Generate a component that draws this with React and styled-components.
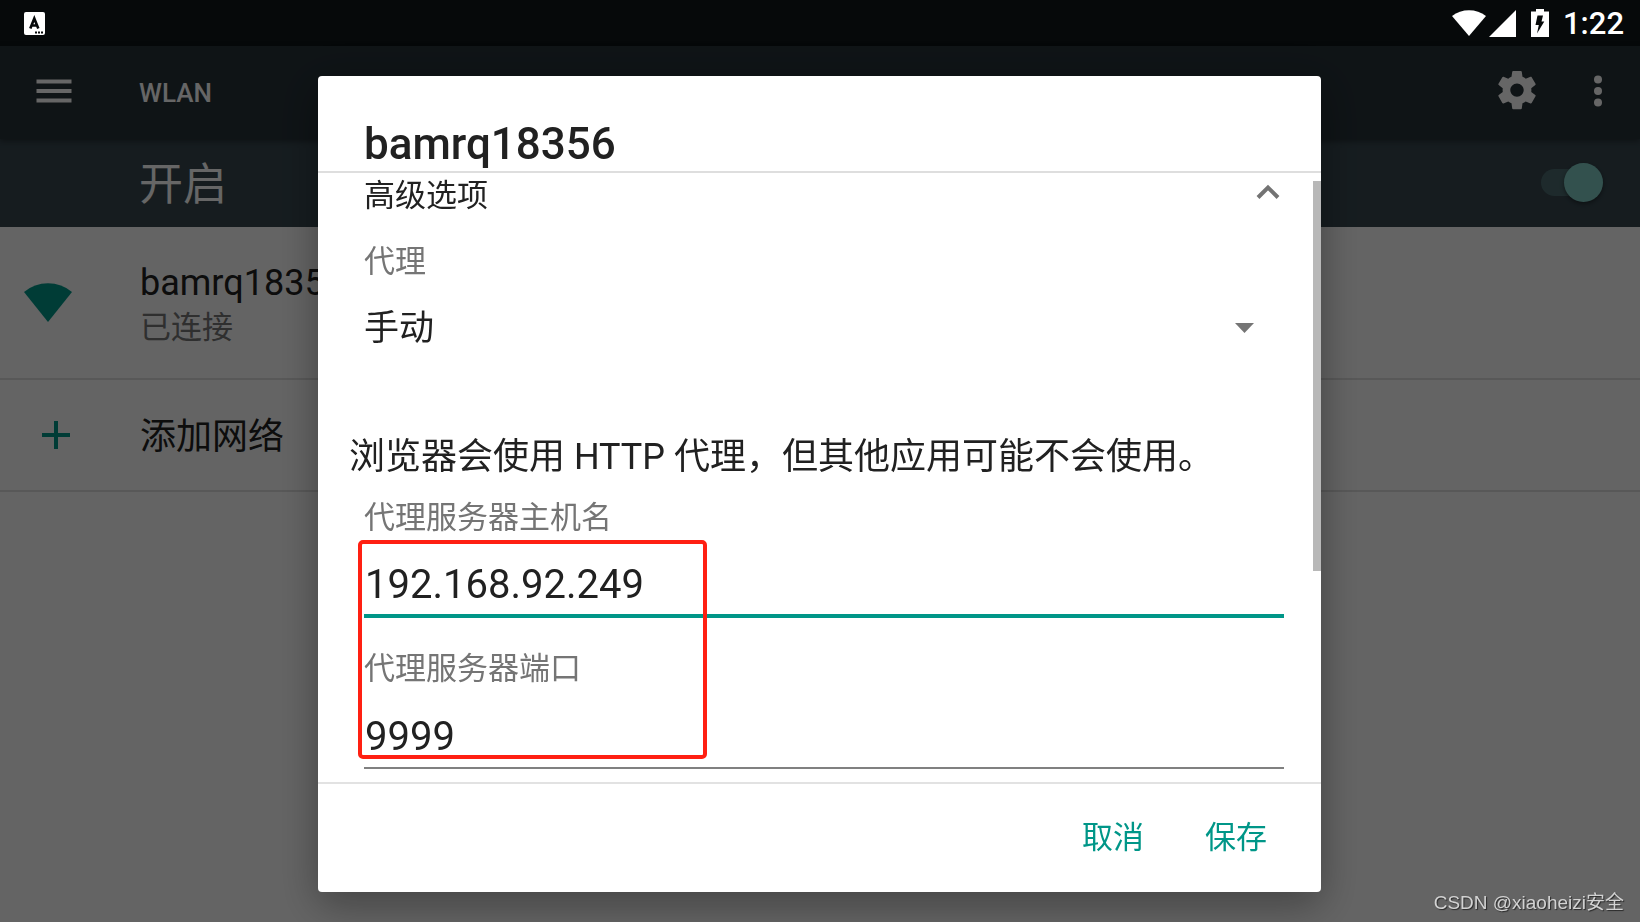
import React, { useState } from "react";
import styled, { createGlobalStyle } from "styled-components";

const GlobalStyle = createGlobalStyle`
  *, *::before, *::after { box-sizing: border-box; }
  html, body { margin: 0; }
  body {
    background: #fafafa;
    color: #212121;
    font-family: Roboto, "Noto Sans CJK SC", sans-serif;
  }
  button, input, select { font: inherit; color: inherit; }
`;

const Page = styled.div`
  min-height: 100vh;
  display: flex;
  flex-direction: column;
`;

const StatusBar = styled.header`
  height: 46px;
  padding: 0 16px 0 24px;
  display: flex;
  align-items: center;
  justify-content: space-between;
  background: #06090a;
  color: #fff;
`;

const StatusIcons = styled.div`
  display: flex;
  align-items: center;
`;

const Clock = styled.time`
  margin-left: 14px;
  padding-top: 2px;
  font-size: 31px;
  font-weight: 500;
  line-height: 46px;
`;

const Toolbar = styled.nav`
  position: relative;
  height: 93px;
  padding: 0 19px 2px 31px;
  display: flex;
  align-items: center;
  background: #263238;
  color: #fff;
  box-shadow: 0 2px 6px rgba(0, 0, 0, 0.4);
`;

const IconButton = styled.button`
  width: 46px;
  height: 46px;
  padding: 0;
  border: 0;
  background: none;
  & > svg { display: block; }
`;

const ToolbarTitle = styled.h1`
  flex: 1;
  margin: 0 0 0 62px;
  padding-top: 2px;
  font-size: 26px;
  font-weight: 500;
  line-height: 46px;
`;

const ToolbarActions = styled.div`
  display: flex;
  gap: 35px;
`;

const SwitchBar = styled.label`
  height: 88px;
  padding: 0 38px 0 139px;
  display: flex;
  align-items: center;
  justify-content: space-between;
  background: #37474f;
  color: #fff;
  font-size: 44px;
  line-height: 60px;
`;

const SwitchText = styled.span`
  padding-top: 4px;
`;

const Switch = styled.input`
  appearance: none;
  position: relative;
  width: 61px;
  height: 27px;
  margin: 0 0 2px;
  border-radius: 14px;
  background: rgba(128, 203, 196, 0.27);
  &::before {
    content: "";
    position: absolute;
    top: -6px;
    left: ${(p) => (p.checked ? "23px" : "0")};
    width: 39px;
    height: 39px;
    border-radius: 50%;
    background: #80cbc4;
    box-shadow: 0 2px 4px rgba(0, 0, 0, 0.4);
  }
`;

const NetworkList = styled.ul`
  margin: 0;
  padding: 0;
  list-style: none;
`;

const NetworkRow = styled.li`
  display: grid;
  grid-template-columns: 140px 1fr;
  align-items: center;
  min-height: 112px;
  padding: ${(p) => (p.$tall ? "28px 0 29px" : "0")};
  border-bottom: 2px solid #dcdcdc;
`;

const RowIcon = styled.div`
  padding-left: ${(p) => p.$indent};
  color: #009688;
  & > svg { display: block; }
`;

const RowTitle = styled.div`
  padding-top: 4px;
  font-size: 36px;
  line-height: 48px;
`;

const RowNote = styled.div`
  font-size: 31px;
  line-height: 42px;
  color: #757575;
`;

const Scrim = styled.div`
  position: fixed;
  inset: 46px 0 0;
  padding-right: 1px;
  display: flex;
  align-items: center;
  justify-content: center;
  background: rgba(0, 0, 0, 0.6);
`;

const Dialog = styled.form`
  width: 90%;
  max-width: 1003px;
  border-radius: 4px;
  background: #fff;
  box-shadow: 0 12px 40px rgba(0, 0, 0, 0.35);
`;

const DialogTitle = styled.h2`
  margin: 0;
  padding: 41px 46px 0;
  border-bottom: 2px solid #dedede;
  font-size: 44px;
  font-weight: 500;
  line-height: 54px;
`;

const DialogBody = styled.div`
  position: relative;
  padding: 0 37px 13px 46px;
`;

const ScrollThumb = styled.div`
  position: absolute;
  top: 8px;
  right: 0;
  width: 8px;
  height: 390px;
  background: #b8b8b8;
`;

const AdvancedToggle = styled.button`
  width: 100%;
  height: 38px;
  margin-bottom: 28px;
  padding: 0;
  border: 0;
  background: none;
  display: flex;
  align-items: center;
  justify-content: space-between;
  font-size: 31px;
`;

const FieldLabel = styled.label`
  display: block;
  font-size: 31px;
  line-height: 46px;
  color: #757575;
`;

const SelectBox = styled.div`
  position: relative;
  & > svg {
    position: absolute;
    top: 38px;
    right: 30px;
    pointer-events: none;
  }
`;

const Select = styled.select`
  appearance: none;
  display: block;
  width: 100%;
  height: 86px;
  padding: 0;
  border: 0;
  background: none;
  font-size: 35px;
  outline: none;
`;

const Message = styled.p`
  margin: 59px 0 11px -15px;
  font-size: 36px;
  line-height: 54px;
`;

const Fields = styled.div`
  display: flex;
  flex-direction: column;
  gap: 28px;
`;

const TextInput = styled.input`
  display: block;
  width: 100%;
  height: 77px;
  padding: 13px 0 0 1px;
  border: 0;
  border-bottom: ${(p) => (p.$active ? "4px solid #009688" : "2px solid #808080")};
  background: none;
  font-size: 40px;
  outline: none;
`;

const Highlight = styled.div`
  position: absolute;
  top: 367px;
  left: 40px;
  width: 349px;
  height: 219px;
  border: 4px solid #ff2012;
  border-radius: 5px;
  pointer-events: none;
`;

const DialogActions = styled.div`
  height: 110px;
  padding: 0 36px;
  border-top: 2px solid #e2e2e2;
  display: flex;
  align-items: center;
  justify-content: flex-end;
  gap: 25px;
`;

const ActionButton = styled.button`
  padding: 0 18px;
  border: 0;
  background: none;
  color: #009688;
  font-size: 31px;
  line-height: 72px;
`;

const Watermark = styled.div`
  position: fixed;
  right: 16px;
  bottom: 4px;
  color: #d2d2d2;
  font-family: "Liberation Sans", "Noto Sans CJK SC", sans-serif;
  font-size: 19px;
  line-height: 30px;
  text-shadow: 1px 1px 1px rgba(0, 0, 0, 0.6);
`;

const KeyboardIcon = () => (
  <svg width="21" height="23" viewBox="0 0 21 23" aria-hidden="true">
    <rect width="21" height="23" rx="2" fill="#fff" />
    <path d="M6.3 16.5 10.3 6.500l4 10M7.6 13.500h5.4" fill="none" stroke="#06090a" strokeWidth="2.600" />
    <path d="M11 19.5h2v2h-2zM14 19.5h2v2h-2zM17 19.5h2v2h-2z" fill="#06090a" />
  </svg>
);

const WifiIcon = ({ width, height }) => (
  <svg width={width} height={height} viewBox="0 0 48 39" preserveAspectRatio="none" aria-hidden="true">
    <path d="M0 9Q10.500 0.300 24 0.300T48 9L24 39Z" fill="currentColor" />
  </svg>
);

const SignalIcon = () => (
  <svg width="27" height="27" viewBox="0 0 27 27" aria-hidden="true">
    <path d="M27 0v27H0Z" fill="#fff" />
  </svg>
);

const BatteryIcon = () => (
  <svg width="18" height="28" viewBox="0 0 18 28" aria-hidden="true">
    <path d="M5 0h8v2.500h5V28H0V2.500h5Z" fill="#fff" />
    <path d="M6.500 6.500h5.500L10.500 12.500h2.800L6 24.500 7.800 16H4.500Z" fill="#06090a" />
  </svg>
);

const MenuIcon = () => (
  <svg width="46" height="46" viewBox="0 0 46 46" fill="currentColor" aria-hidden="true">
    <path d="M5.500 10.500h35v4h-35zM5.500 20h35v4h-35zM5.500 29.500h35v4h-35z" />
  </svg>
);

const GearIcon = () => (
  <svg width="46" height="46" viewBox="0 0 24 24" fill="currentColor" aria-hidden="true">
    <path
      transform="translate(0 -1)"
      d="M19.430 12.980c.04-.32.07-.64.07-.98s-.03-.66-.07-.98l2.110-1.650c.19-.15.24-.42.12-.64l-2-3.460c-.12-.22-.39-.3-.61-.22l-2.490 1c-.52-.4-1.080-.73-1.690-.98l-.38-2.650C14.460 2.180 14.250 2 14 2h-4c-.25 0-.46.18-.49.42l-.38 2.650c-.61.25-1.170.59-1.690.98l-2.490-1c-.23-.09-.49 0-.61.22l-2 3.460c-.13.22-.07.49.12.64l2.110 1.650c-.04.32-.07.65-.07.98s.03.66.07.98l-2.110 1.650c-.19.15-.24.42-.12.64l2 3.460c.12.22.39.3.61.22l2.490-1c.52.4 1.080.73 1.690.98l.38 2.650c.03.24.24.42.49.42h4c.25 0 .46-.18.49-.42l.38-2.650c.61-.25 1.170-.59 1.690-.98l2.490 1c.23.09.49 0 .61-.22l2-3.460c.12-.22.07-.49-.12-.64l-2.110-1.650zM12 15.500c-1.930 0-3.500-1.570-3.500-3.500s1.570-3.500 3.500-3.500 3.500 1.570 3.500 3.500-1.570 3.500-3.500 3.500z"
    />
  </svg>
);

const MoreIcon = () => (
  <svg width="46" height="46" viewBox="0 0 46 46" fill="currentColor" aria-hidden="true">
    <circle cx="23" cy="10.500" r="4" />
    <circle cx="23" cy="22" r="4" />
    <circle cx="23" cy="33.500" r="4" />
  </svg>
);

const PlusIcon = () => (
  <svg width="28" height="28" viewBox="0 0 28 28" aria-hidden="true">
    <path d="M14 0v28M0 14h28" stroke="currentColor" strokeWidth="4" />
  </svg>
);

const ChevronUpIcon = () => (
  <svg width="32" height="16" viewBox="0 0 32 16" aria-hidden="true">
    <path d="M6 13.500 16 3.500l10 10" fill="none" stroke="#737373" strokeWidth="4" />
  </svg>
);

const CaretIcon = () => (
  <svg width="19" height="10" viewBox="0 0 19 10" aria-hidden="true">
    <path d="M0 0h19L9.500 10Z" fill="#757575" />
  </svg>
);

export default function App() {
  const [enabled, setEnabled] = useState(true);
  const [host, setHost] = useState("192.168.92.249");
  const [port, setPort] = useState("9999");

  return (
    <Page>
      <GlobalStyle />
      <StatusBar>
        <KeyboardIcon />
        <StatusIcons>
          <WifiIcon width={34} height={26} />
          <svg width="3" height="1" aria-hidden="true" />
          <SignalIcon />
          <svg width="15" height="1" aria-hidden="true" />
          <BatteryIcon />
          <Clock>1:22</Clock>
        </StatusIcons>
      </StatusBar>

      <Toolbar>
        <IconButton type="button" aria-label="菜单"><MenuIcon /></IconButton>
        <ToolbarTitle>WLAN</ToolbarTitle>
        <ToolbarActions>
          <IconButton type="button" aria-label="设置"><GearIcon /></IconButton>
          <IconButton type="button" aria-label="更多"><MoreIcon /></IconButton>
        </ToolbarActions>
      </Toolbar>

      <SwitchBar>
        <SwitchText>开启</SwitchText>
        <Switch
          type="checkbox"
          role="switch"
          checked={enabled}
          onChange={(e) => setEnabled(e.target.checked)}
        />
      </SwitchBar>

      <NetworkList>
        <NetworkRow $tall>
          <RowIcon $indent="24px"><WifiIcon width={48} height={39} /></RowIcon>
          <div>
            <RowTitle>bamrq18356</RowTitle>
            <RowNote>已连接</RowNote>
          </div>
        </NetworkRow>
        <NetworkRow>
          <RowIcon $indent="42px"><PlusIcon /></RowIcon>
          <RowTitle>添加网络</RowTitle>
        </NetworkRow>
      </NetworkList>

      <Scrim>
        <Dialog role="dialog" aria-labelledby="dialog-title" onSubmit={(e) => e.preventDefault()}>
          <DialogTitle id="dialog-title">bamrq18356</DialogTitle>
          <DialogBody>
            <AdvancedToggle type="button" aria-expanded="true">
              高级选项
              <ChevronUpIcon />
            </AdvancedToggle>
            <FieldLabel htmlFor="proxy">代理</FieldLabel>
            <SelectBox>
              <Select id="proxy" defaultValue="manual">
                <option value="manual">手动</option>
              </Select>
              <CaretIcon />
            </SelectBox>
            <Message>浏览器会使用 HTTP 代理，但其他应用可能不会使用。</Message>
            <Fields>
              <div>
                <FieldLabel htmlFor="host">代理服务器主机名</FieldLabel>
                <TextInput id="host" $active value={host} onChange={(e) => setHost(e.target.value)} />
              </div>
              <div>
                <FieldLabel htmlFor="port">代理服务器端口</FieldLabel>
                <TextInput id="port" value={port} onChange={(e) => setPort(e.target.value)} />
              </div>
            </Fields>
            <ScrollThumb />
            <Highlight />
          </DialogBody>
          <DialogActions>
            <ActionButton type="button">取消</ActionButton>
            <ActionButton type="submit">保存</ActionButton>
          </DialogActions>
        </Dialog>
      </Scrim>
      <Watermark>CSDN @xiaoheizi安全</Watermark>
    </Page>
  );
}
